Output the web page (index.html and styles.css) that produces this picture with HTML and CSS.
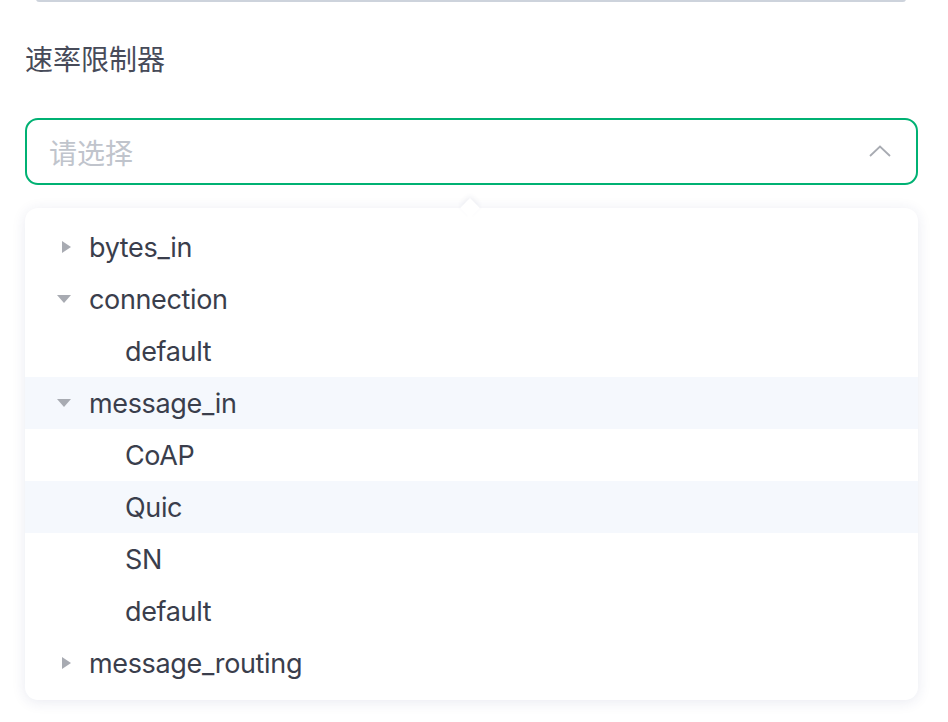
FILE: index.html
```html
<!DOCTYPE html>
<html lang="zh">
<head>
<meta charset="utf-8">
<link rel="stylesheet" href="styles.css">
</head>
<body>
<div class="page">
  <div class="topline"></div>
  <div class="field">
    <label class="label">速率限制器</label>
    <div class="select">
      <span class="placeholder">请选择</span>
      <svg class="chevron" width="22" height="12" viewBox="0 0 22 12"><path d="M1 11 L11 1.5 L21 11" fill="none" stroke="#a8abb2" stroke-width="1.8"/></svg>
    </div>
    <div class="dropdown">
      <div class="arrow"></div>
      <ul class="tree">
        <li class="row lvl1"><span class="caret right"></span><span class="txt">bytes_in</span></li>
        <li class="row lvl1"><span class="caret down"></span><span class="txt">connection</span></li>
        <li class="row lvl2"><span class="txt">default</span></li>
        <li class="row lvl1 hl"><span class="caret down"></span><span class="txt">message_in</span></li>
        <li class="row lvl2"><span class="txt">CoAP</span></li>
        <li class="row lvl2 hl"><span class="txt">Quic</span></li>
        <li class="row lvl2"><span class="txt">SN</span></li>
        <li class="row lvl2"><span class="txt">default</span></li>
        <li class="row lvl1"><span class="caret right"></span><span class="txt">message_routing</span></li>
      </ul>
    </div>
  </div>
</div>
</body>
</html>
```
FILE: styles.css
```css
* { box-sizing: border-box; }
html, body { margin: 0; padding: 0; background: #fff; }
body { font-family: Inter, "Noto Sans CJK SC", sans-serif; color: #3a3e4c; }
.page { width: 948px; height: 722px; overflow: hidden; }
.topline {
  height: 3px;
  margin: -1px 42px 0 36px;
  background: #cdd3dc;
  border-radius: 0 0 3px 3px;
}
.field { padding: 0 30px 0 25px; }
.label {
  display: block;
  margin-top: 40px;
  font-size: 28px;
  line-height: 32px;
  color: #474b59;
  font-family: "Noto Sans CJK SC", sans-serif;
}
.select {
  margin-top: 44px;
  height: 67px;
  border: 2px solid #00b173;
  border-radius: 13px;
  display: flex;
  align-items: center;
  justify-content: space-between;
  padding: 0 25px 0 22px;
}
.placeholder {
  font-family: "Noto Sans CJK SC", sans-serif;
  font-size: 28px;
  line-height: 32px;
  color: #c0c4cc;
}
.chevron { display: block; margin-top: -2px; }
.dropdown {
  position: relative;
  margin-top: 23px;
  background: #fff;
  border-radius: 13px;
  box-shadow: 0 2px 14px rgba(40, 50, 120, 0.10);
  padding: 13px 0 11px;
}
.arrow {
  position: absolute;
  top: -7px;
  left: 438px;
  width: 14px;
  height: 14px;
  background: #fff;
  transform: rotate(45deg);
  box-shadow: -2px -2px 5px rgba(40, 50, 120, 0.07);
}
.tree { list-style: none; margin: 0; padding: 0; position: relative; }
.row {
  height: 52px;
  display: flex;
  align-items: center;
  font-size: 27px;
  letter-spacing: -0.35px;
}
.row.hl { background: #f5f8fd; }
.lvl1 { padding-left: 32px; }
.lvl2 { padding-left: 100px; }
.caret { width: 32px; height: 14px; position: relative; display: block; }
.caret.right::before {
  content: "";
  position: absolute;
  left: 5px; top: 1px;
  border-left: 9px solid #a8abb2;
  border-top: 6px solid transparent;
  border-bottom: 6px solid transparent;
}
.caret.down::before {
  content: "";
  position: absolute;
  left: 0; top: 3px;
  border-top: 8px solid #a8abb2;
  border-left: 7.5px solid transparent;
  border-right: 7.5px solid transparent;
}
.txt { display: block; line-height: 32px; padding-top: 1px; }
```
